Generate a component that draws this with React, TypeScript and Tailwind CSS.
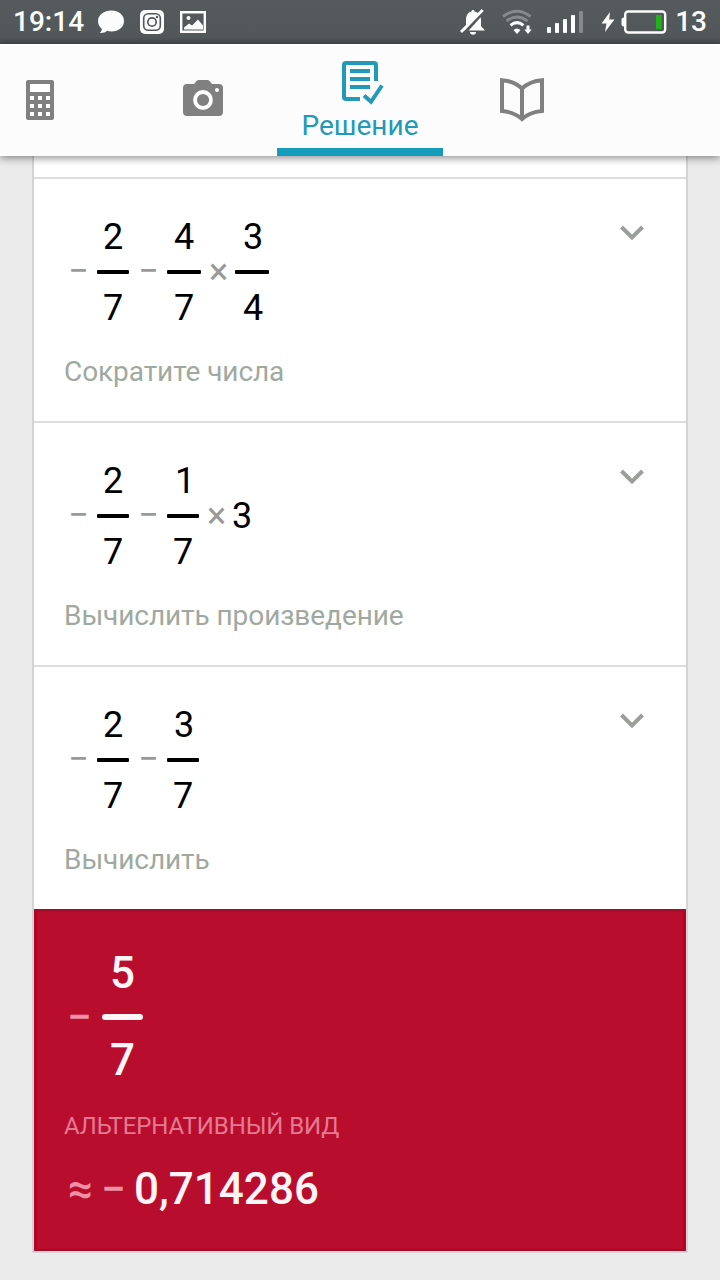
import type { ReactNode } from "react";

function StatusBar() {
  return (
    <div className="flex h-11 shrink-0 items-center bg-linear-to-b from-[#555b5d] via-[#525859] via-85% to-[#454a4b] text-[28px] leading-8 font-medium text-[#fafdfc]">
      <span className="ml-[13px] w-[85px]">19:14</span>
      <svg className="h-6 w-7" viewBox="0 0 28 24" fill="currentColor">
        <path d="M13.500 .5C20.700.5 26 5 26 11S20.700 21.500 13.500 21.500c-1.700 0-3.200-.2-4.500-.7-1.700 1.700-4 2.500-7.200 2.200 1.400-1.200 2-2.500 2-4.200C1.500 17 0 14.500 0 11 0 5 6 .5 13.500.5z" />
      </svg>
      <svg className="ml-[14px] size-6" viewBox="0 0 24 24" fill="none">
        <rect width="24" height="24" rx="5" fill="#fafdfc" />
        <rect x="3.700" y="3.700" width="16.600" height="16.600" rx="4.500" stroke="#525859" strokeWidth="1.600" />
        <circle cx="12" cy="12" r="4.200" stroke="#525859" strokeWidth="1.700" />
        <circle cx="17" cy="7" r="1.200" fill="#525859" />
      </svg>
      <svg className="ml-4 h-[22px] w-[26px]" viewBox="0 0 26 22">
        <path d="M1.200 1.200h23.600v19.600H1.200z" fill="none" stroke="currentColor" strokeWidth="2.400" />
        <path d="M4 18.500v-2l5-4 3 2 6-6 5 6v4z" fill="currentColor" />
        <circle cx="8.500" cy="7" r="2" fill="currentColor" />
      </svg>
      <div className="ml-auto flex items-center">
        <svg className="h-[26px] w-[26px]" viewBox="0 0 26 26">
          <path d="M13 1c.8 0 1.500.7 1.500 1.500 4 .9 6.500 4.200 6.500 8.500v6l4 4.500H2l4-4.500v-6c0-4.300 1.600-7.600 5.500-8.500C11.500 1.700 12.200 1 13 1zM10 23h6c0 1.700-1.300 2.800-3 2.800S10 24.700 10 23z" fill="currentColor" />
          <path d="M23 3.500 3.500 25" stroke="#525859" strokeWidth="3" />
          <path d="M22.700 1 1 23" stroke="currentColor" strokeWidth="2.800" />
        </svg>
        <svg className="ml-4 h-[26px] w-[31px]" viewBox="0 0 31 26" fill="none" strokeWidth="3">
          <path d="M1 7.500Q15 -3 28.500 7.500" stroke="#858a8b" />
          <path d="M4.500 12Q15 4 25.500 12" stroke="#858a8b" />
          <path d="M8.500 16.300Q15 11 21.500 16.300" stroke="currentColor" />
          <path d="M11.500 21q3.500-3 7 0L15 25z" fill="currentColor" />
          <path d="M26 16.500V22" stroke="currentColor" />
          <path d="M22.300 20.500h7.400L26 25z" fill="currentColor" />
        </svg>
        <svg className="ml-[14px] h-6 w-9" viewBox="0 0 36 24" fill="currentColor">
          <rect y="17" width="4" height="6" rx="1" />
          <rect x="8" y="13" width="4" height="10" rx="1" />
          <rect x="16" y="9" width="4" height="14" rx="1" />
          <rect x="24" y="5" width="4" height="18" rx="1" />
          <rect x="32" y="1" width="4" height="22" rx="1" fill="#858a8b" />
        </svg>
        <svg className="ml-[18px] h-5 w-[14px]" viewBox="0 0 14 20" fill="currentColor">
          <path d="M9 0 .5 11.500h5L4 20 13.500 7.500H8.200z" />
        </svg>
        <svg className="ml-[6px] h-6 w-[46px]" viewBox="0 0 46 24">
          <path d="M4 8H2.200Q1 8 1 9.500v5Q1 16 2.200 16H4" fill="currentColor" stroke="currentColor" />
          <rect x="4.200" y="1.500" width="40" height="21" rx="3" fill="none" stroke="currentColor" strokeWidth="2.400" />
          <rect x="35" y="5" width="5.500" height="14" fill="#20b21c" />
        </svg>
        <span className="mr-[13px] ml-[8px]">13</span>
      </div>
    </div>
  );
}

function TabBar() {
  return (
    <nav className="relative z-10 flex h-28 shrink-0 border-t-2 border-white bg-[#fcfcfc] text-[#808080] shadow-[0_2px_8px_rgba(0,0,0,0.45)]">
      <div className="flex w-[129px] pt-[34px] pl-[26px]">
        <svg className="h-10 w-7" viewBox="0 0 28 40">
          <rect width="28" height="40" rx="2" fill="currentColor" />
          <path d="M4 4h20v8H4zM4 16h4v4H4zM12 16h4v4h-4zM20 16h4v4h-4zM4 24h4v4H4zM12 24h4v4h-4zM20 24h4v4h-4zM4 32h4v4H4zM12 32h4v4h-4zM20 32h4v4h-4z" fill="#fff" />
        </svg>
      </div>
      <div className="flex w-[148px] justify-center pt-[34px]">
        <svg className="h-9 w-10" viewBox="0 0 40 36">
          <path d="M4 4h7l2.500-3q.8-1 2-1h9q1.200 0 2 1L29 4h7q4 0 4 4v24q0 4-4 4H4q-4 0-4-4V8q0-4 4-4z" fill="currentColor" />
          <circle cx="20" cy="20" r="8" fill="none" stroke="#fff" strokeWidth="3.800" />
          <circle cx="34" cy="10" r="2" fill="#fff" />
        </svg>
      </div>
      <div className="flex w-[166px] flex-col items-center border-b-8 border-[#149cba] pt-[15px] text-[#2299b6]">
        <svg className="ml-[5px] h-11 w-[42px] shrink-0" viewBox="0 0 42 44" fill="none" stroke="currentColor" strokeWidth="4">
          <path d="M18 38H4q-2 0-2-2V4q0-2 2-2h28q2 0 2 2v16" />
          <path d="M8 10h20M8 18h20M8 26h20" />
          <path d="m22 34.500 7 6.300L40 24.500" />
        </svg>
        <span className="mt-[5px] text-[28px] leading-8">Решение</span>
      </div>
      <div className="flex w-[158px] justify-center pt-8">
        <svg className="h-11 w-11" viewBox="0 0 44 44" fill="none" stroke="currentColor" strokeWidth="4">
          <path d="M22 10.500Q14 3 2 2.200V33q12 1 20 8 8-7 20-8V2.200Q30 3 22 10.500V41" />
        </svg>
      </div>
    </nav>
  );
}

function Operator({ children, wide }: { children: string; wide?: boolean }) {
  return (
    <span className={`text-center text-[#999] ${wide ? "-mt-[3px] w-[29px] text-[36px] leading-9" : "-mt-0.5 w-[25px] text-[36px] leading-9"}`}>
      {children}
    </span>
  );
}

function Fraction({ top, bottom, wide }: { top: string; bottom: string; wide?: boolean }) {
  return (
    <span className={`mr-[5px] ml-1 flex flex-col items-center text-[36px] leading-[42px] ${wide ? "w-[34px]" : "w-8"}`}>
      <span className={top === "1" ? "pl-1" : top === "3" ? "pl-0.5" : ""}>{top}</span>
      <span className="mt-3 mb-[13px] h-1 w-full rounded-[1px] bg-black" />
      <span className={bottom === "4" ? "pl-0.5" : ""}>{bottom}</span>
    </span>
  );
}

function Step({ label, children }: { label: string; children: ReactNode }) {
  return (
    <section className="flex h-[244px] justify-between border-t-2 border-[#dfdfdf] pt-[37px] pr-[42px] pl-[30px]">
      <div>
        <div className="flex h-[113px] items-center text-black">{children}</div>
        <p className="mt-[27px] text-[28px] leading-8 tracking-[-0.07px] text-[#9fa9a0]">{label}</p>
      </div>
      <svg className="mt-[9px] h-4 w-6" viewBox="0 0 24 16" fill="none" stroke="#9b9f9b" strokeWidth="4">
        <path d="m1.500 2 10.500 10.500L22.500 2" />
      </svg>
    </section>
  );
}

function Result() {
  return (
    <section className="h-[342px] border-y-2 border-[#a00c2a] bg-[#b90d2e] pl-[30px] text-[44px] leading-[52px] font-medium text-[#fff5f7] shadow-[inset_3px_0_1px_#b40425,inset_-3px_0_1px_#b40425]">
      <div className="flex items-center pt-[36px]">
        <span className="w-[31px] text-center text-[#f092a6]">−</span>
        <span className="ml-[7px] flex w-[41px] flex-col items-center">
          <span>5</span>
          <span className="mt-[15px] mb-[14px] h-[6px] w-full rounded-full bg-[#fff5f7]" />
          <span>7</span>
        </span>
      </div>
      <p className="mt-[26px] text-[24px] leading-7 font-normal tracking-[-0.1px] text-[#e37b90]">АЛЬТЕРНАТИВНЫЙ ВИД</p>
      <div className="mt-[23px] flex">
        <span className="w-[33px] text-center text-[#f092a6]">≈</span>
        <span className="w-[33px] text-center text-[#f092a6]">−</span>
        <span className="ml-[4px]">0,714286</span>
      </div>
    </section>
  );
}

export default function App() {
  return (
    <div className="flex h-[1280px] w-[720px] flex-col overflow-hidden bg-[#ebebeb] font-[Roboto,'Noto_Sans',sans-serif]">
      <StatusBar />
      <TabBar />
      <main className="mx-8 h-[1097px] border-x-2 border-b-2 border-[#d4d4d4] bg-white pt-[21px]">
        <Step label="Сократите числа">
          <Operator wide>−</Operator>
          <Fraction top="2" bottom="7" />
          <Operator wide>−</Operator>
          <Fraction top="4" bottom="7" wide />
          <Operator>×</Operator>
          <Fraction top="3" bottom="4" wide />
        </Step>
        <Step label="Вычислить произведение">
          <Operator wide>−</Operator>
          <Fraction top="2" bottom="7" />
          <Operator wide>−</Operator>
          <Fraction top="1" bottom="7" />
          <Operator>×</Operator>
          <span className="-mt-0.5 ml-[3px] text-[36px] leading-[42px]">3</span>
        </Step>
        <Step label="Вычислить">
          <Operator wide>−</Operator>
          <Fraction top="2" bottom="7" />
          <Operator wide>−</Operator>
          <Fraction top="3" bottom="7" />
        </Step>
        <Result />
      </main>
    </div>
  );
}
